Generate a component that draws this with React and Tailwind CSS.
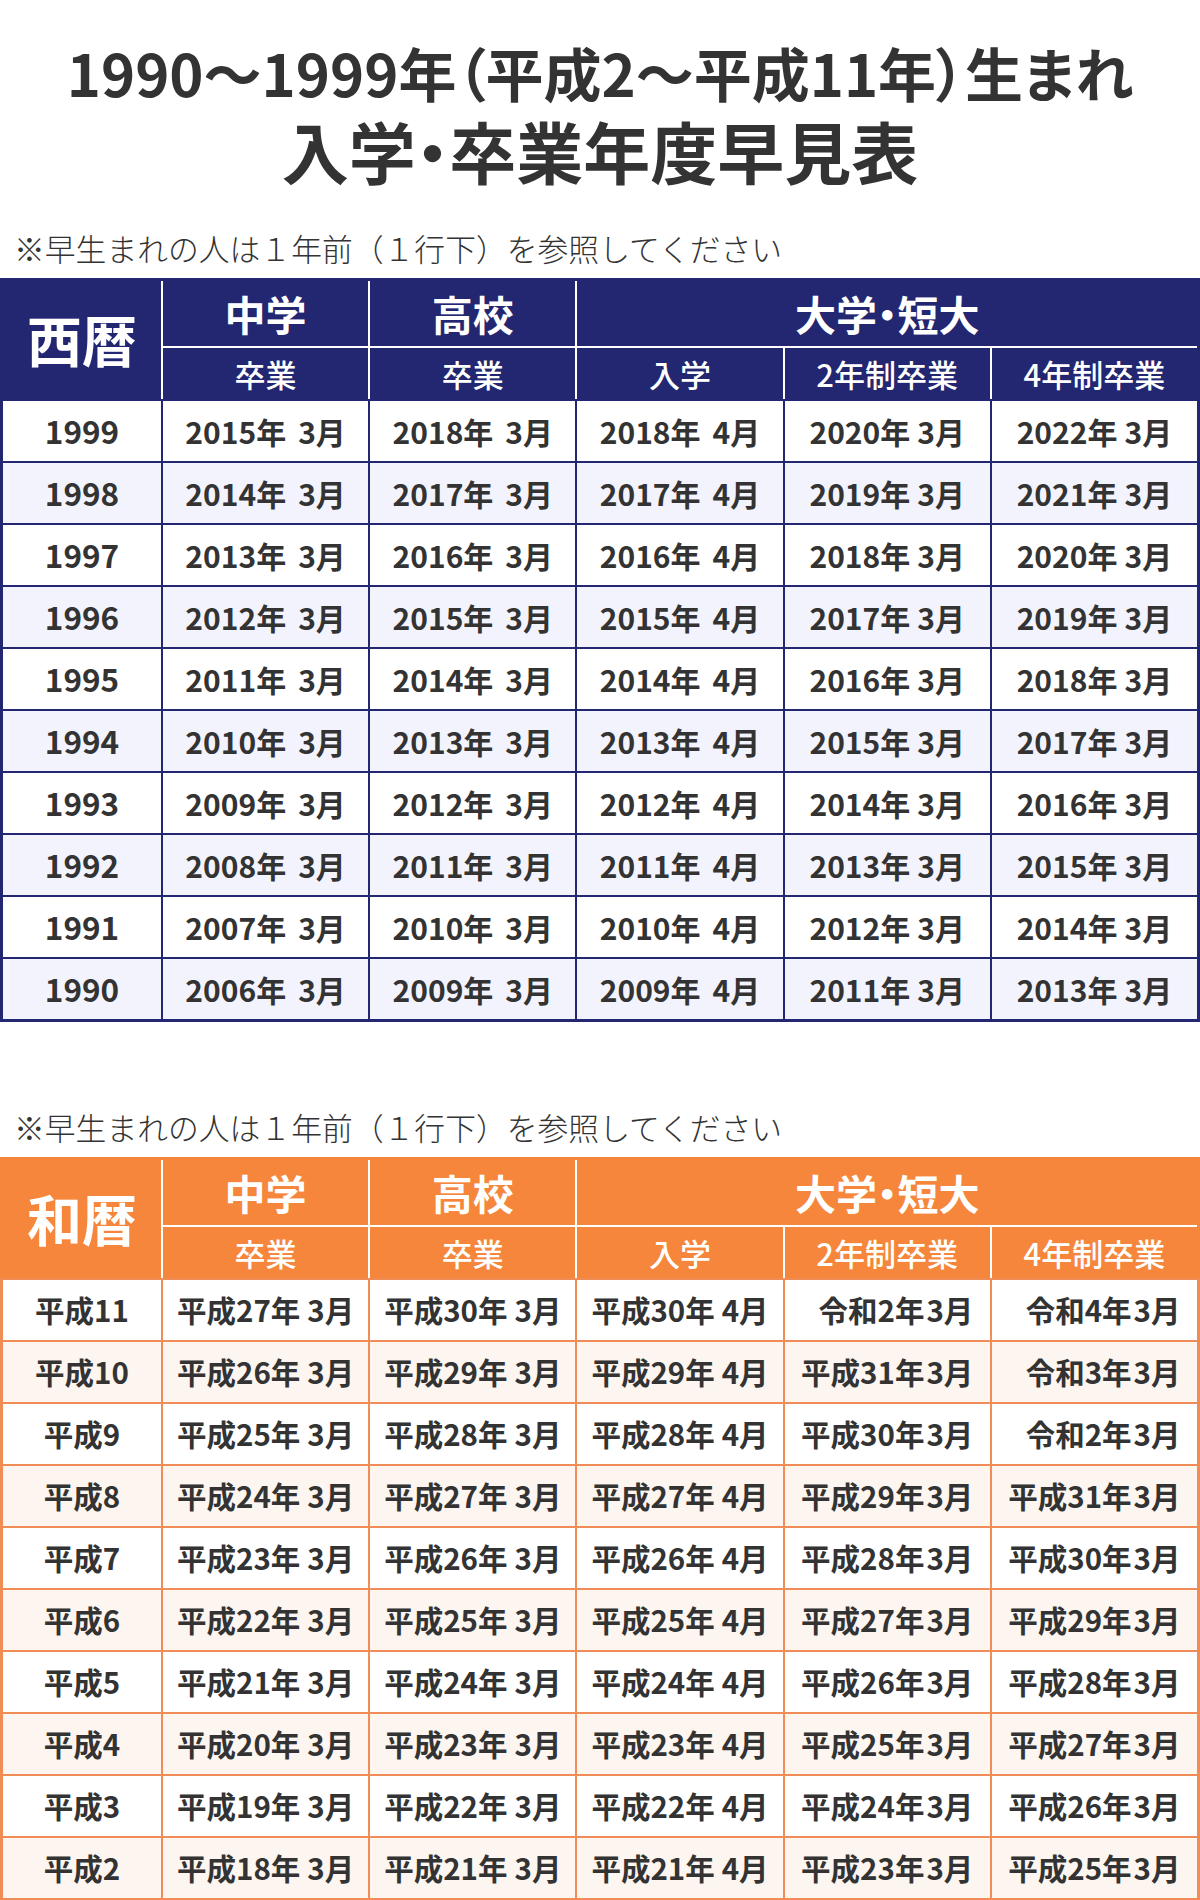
import React from "react";

const westernRows = [1999, 1998, 1997, 1996, 1995, 1994, 1993, 1992, 1991, 1990].map((y) => ({
  label: String(y),
  cells: [
    { a: `${y + 16}年`, b: "3月", wide: true },
    { a: `${y + 19}年`, b: "3月", wide: true },
    { a: `${y + 19}年`, b: "4月", wide: true },
    { a: `${y + 21}年`, b: "3月", wide: false },
    { a: `${y + 23}年`, b: "3月", wide: false },
  ],
}));

function era(n) {
  if (n >= 32) return { text: `令和${n - 30}年`, pad: true };
  return { text: `平成${n}年`, pad: false };
}

const japaneseRows = [11, 10, 9, 8, 7, 6, 5, 4, 3, 2].map((n) => {
  const e5 = era(n + 21);
  const e6 = era(n + 23);
  return {
    label: `平成${n}`,
    cells: [
      { a: `平成${n + 16}年`, b: "3月", wide: true },
      { a: `平成${n + 19}年`, b: "3月", wide: true },
      { a: `平成${n + 19}年`, b: "4月", wide: true },
      { a: e5.text, b: "3月", wide: false, pad: e5.pad },
      { a: e6.text, b: "3月", wide: false, pad: e6.pad },
    ],
  };
});

const themes = {
  navy: {
    headWrap: "border-[#232670]",
    head: "bg-[#232670]",
    body: "bg-[#232670] border-[#232670]",
    alt: "bg-[#f3f3fd]",
    size: "text-[30px]",
    labelSize: "text-[31.5px]",
    wide: "ml-[12px]",
    narrow: "ml-[7px]",
  },
  orange: {
    headWrap: "border-[#f5863b]",
    head: "bg-[#f5863b]",
    body: "bg-[#f08c55] border-[#f08c55]",
    alt: "bg-[#fdf5f0]",
    size: "text-[29.5px]",
    labelSize: "text-[29.5px]",
    wide: "ml-[7px]",
    narrow: "ml-[2px]",
  },
};

function Cell({ c, bg, t }) {
  return (
    <div className={`flex h-[60px] items-center justify-center font-bold leading-none text-[#333] ${t.size} ${bg}`}>
      <span className="whitespace-nowrap">
        {c.pad ? <span className="invisible">0</span> : null}
        {c.a}
        <span className={c.wide ? t.wide : t.narrow}>{c.b}</span>
      </span>
    </div>
  );
}

function Table({ theme, label, rows }) {
  const t = themes[theme];
  return (
    <div>
      <div
        className={`grid grid-cols-[158px_repeat(5,minmax(0,1fr))] grid-rows-[65px_51px] gap-[2px] border-[3px] border-b-0 bg-white text-white [font-feature-settings:'palt'] ${t.headWrap}`}
      >
        <div className={`row-span-2 flex items-center justify-center pb-[4px] text-[55px] font-bold leading-none ${t.head}`}>
          {label}
        </div>
        <div className={`flex items-center justify-center text-[41px] font-bold leading-none ${t.head}`}>中学</div>
        <div className={`flex items-center justify-center text-[41px] font-bold leading-none ${t.head}`}>高校</div>
        <div className={`col-span-3 flex items-center justify-center text-[41px] font-bold leading-none ${t.head}`}>
          大学・短大
        </div>
        {["卒業", "卒業", "入学", "2年制卒業", "4年制卒業"].map((s, i) => (
          <div key={i} className={`flex items-center justify-center text-[31px] font-medium leading-none ${t.head}`}>
            {s}
          </div>
        ))}
      </div>
      <div className={`grid grid-cols-[158px_repeat(5,minmax(0,1fr))] gap-[2px] border-[3px] border-t-[2px] ${t.body}`}>
        {rows.map((r, ri) => {
          const bg = ri % 2 === 1 ? t.alt : "bg-white";
          return (
            <React.Fragment key={ri}>
              <div className={`flex h-[60px] items-center justify-center font-bold leading-none text-[#333] ${t.labelSize} ${bg}`}>
                {r.label}
              </div>
              {r.cells.map((c, ci) => (
                <Cell key={ci} c={c} bg={bg} t={t} />
              ))}
            </React.Fragment>
          );
        })}
      </div>
    </div>
  );
}

const note = "※早生まれの人は１年前（１行下）を参照してください";

export default function App() {
  return (
    <div className="w-[1200px] bg-white font-['Noto_Sans_CJK_JP',sans-serif] text-[#333]">
      <h1 className="pt-[32px] text-center font-bold [font-feature-settings:'palt']">
        <div className="text-[58px] leading-[80px]">1990～1999年（平成2～平成11年）生まれ</div>
        <div className="text-[67px] leading-[76px]">入学・卒業年度早見表</div>
      </h1>
      <p className="mt-[40px] pl-[14px] text-[30.8px] font-light leading-[40px] text-[#333]">{note}</p>
      <div className="mt-[10px]">
        <Table theme="navy" label="西暦" rows={westernRows} />
      </div>
      <p className="mt-[85px] pl-[14px] text-[30.8px] font-light leading-[40px] text-[#333]">{note}</p>
      <div className="mt-[10px]">
        <Table theme="orange" label="和暦" rows={japaneseRows} />
      </div>
    </div>
  );
}
